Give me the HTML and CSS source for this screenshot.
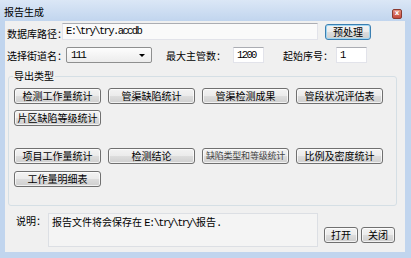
FILE: index.html
```html
<!DOCTYPE html>
<html lang="zh">
<head>
  <meta charset="UTF-8" />
  <title>报告生成</title>
  <link rel="stylesheet" href="styles.css">
</head>
<body>

  <div class="window">
    <div class="titlebar">
      <span class="title">报告生成</span>
      <span class="close">x</span>
    </div>

    <div class="client">
      <div class="row row-path">
        <span class="lbl lbl-path">数据库路径：</span>
        <div class="textbox txt-path">E:\try\try.accdb</div>
        <button class="btn btn-default btn-pre">预处理</button>
      </div>

      <div class="row row-opts">
        <span class="lbl lbl-street">选择街道名：</span>
        <div class="combo">
          <span class="mono">111</span>
          <span class="arrow"></span>
        </div>
        <span class="lbl lbl-max">最大主管数：</span>
        <div class="textbox txt-small">1200</div>
        <span class="lbl lbl-start">起始序号：</span>
        <div class="textbox txt-small">1</div>
      </div>

      <fieldset class="group">
        <legend>导出类型</legend>
        <div class="btn-block">
          <button class="btn btn-export">检测工作量统计</button>
          <button class="btn btn-export">管渠缺陷统计</button>
          <button class="btn btn-export">管渠检测成果</button>
          <button class="btn btn-export">管段状况评估表</button>
          <button class="btn btn-export">片区缺陷等级统计</button>
        </div>
        <div class="btn-block block-second">
          <button class="btn btn-export">项目工作量统计</button>
          <button class="btn btn-export">检测结论</button>
          <button class="btn btn-export btn-small-text">缺陷类型和等级统计</button>
          <button class="btn btn-export">比例及密度统计</button>
          <button class="btn btn-export">工作量明细表</button>
        </div>
      </fieldset>

      <div class="row row-note">
        <span class="lbl lbl-note">说明：</span>
        <div class="note">报告文件将会保存在 <span class="mono">E:\try\try\</span>报告<span class="mono">.</span></div>
        <div class="actions">
          <button class="btn btn-action">打开</button>
          <button class="btn btn-action">关闭</button>
        </div>
      </div>
    </div>
  </div>

</body>
</html>
```

FILE: styles.css
```css
body {
  margin: 0;
  padding: 0;
  font-family: "Noto Sans CJK SC", "Noto Sans", sans-serif;
  font-size: 10px;
  color: #000;
  background: #fff;
}
.window {
  width: 411px;
  height: 258px;
  background: #c1d5ee;
  box-sizing: border-box;
}
.titlebar {
  height: 21px;
  display: flex;
  justify-content: space-between;
  align-items: flex-start;
  padding: 0 9px 0 4px;
  background: linear-gradient(#dbe7f6, #c1d5ee);
}
.title {
  margin-top: 6px;
  line-height: 12px;
  font-size: 10px;
}
.close {
  margin-top: 9px;
  width: 10px;
  height: 10px;
  box-sizing: border-box;
  border: 1px solid #8a3a30;
  border-radius: 2px;
  background: linear-gradient(#e6917f, #c4473a);
  color: #fff;
  font-family: "DejaVu Sans", sans-serif;
  font-size: 7px;
  font-weight: bold;
  line-height: 7px;
  text-align: center;
}
.client {
  margin-left: 5px;
  width: 400px;
  height: 231px;
  background: #f0f0f0;
  padding-left: 2px;
  box-sizing: border-box;
  overflow: hidden;
}
.row {
  display: flex;
  align-items: center;
}
.lbl {
  display: block;
  line-height: 12px;
  white-space: nowrap;
  overflow: visible;
}
.mono {
  font-family: "Liberation Mono", monospace;
  font-size: 10.5px;
  letter-spacing: -1.6px;
}
.textbox {
  box-sizing: border-box;
  background: #fff;
  border: 1px solid #e2e3ea;
  border-top-color: #abadb3;
  font-family: "Liberation Mono", monospace;
  font-size: 10.5px;
  letter-spacing: -1.6px;
  padding: 1px 3px;
  line-height: 12px;
  white-space: nowrap;
}

/* ligne chemin */
.row-path {
  margin-top: 2px;
  height: 17px;
}
.lbl-path {
  width: 55px;
  margin-top: 4px;
}
.txt-path {
  width: 256px;
  height: 17px;
  background: #fafafa;
}
.btn-pre {
  margin-left: 7px;
  width: 46px;
  height: 16px;
  margin-top: 1px;
}

/* ligne options */
.row-opts {
  margin-top: 7px;
  height: 16px;
}
.lbl-street {
  width: 59px;
  margin-top: 2px;
}
.combo {
  width: 86px;
  height: 16px;
  box-sizing: border-box;
  border: 1px solid #8e8f8f;
  border-radius: 2px;
  background: linear-gradient(#fdfdfd, #ececec);
  display: flex;
  align-items: center;
  justify-content: space-between;
  padding: 0 6px 0 4px;
}
.arrow {
  width: 0;
  height: 0;
  border-left: 3px solid transparent;
  border-right: 3px solid transparent;
  border-top: 3px solid #000;
}
.lbl-max {
  margin-left: 14px;
  width: 67px;
  margin-top: 1px;
}
.txt-small {
  width: 31px;
  height: 16px;
}
.lbl-start {
  margin-left: 19px;
  width: 53px;
  margin-top: 1px;
}

/* boutons */
.btn {
  box-sizing: border-box;
  border: 1px solid #707070;
  border-radius: 3px;
  background: linear-gradient(#f3f3f3 0%, #ebebeb 50%, #dddddd 51%, #cfcfcf 100%);
  box-shadow: inset 0 0 0 1px rgba(255,255,255,0.7);
  font-family: "Noto Sans CJK SC", "Noto Sans", sans-serif;
  font-size: 10px;
  line-height: 12px;
  padding: 0;
  color: #000;
  white-space: nowrap;
}
.btn-default {
  border-color: #3c7fb1;
  box-shadow: inset 0 0 0 1px #9fd6f3;
}

/* groupe export */
.group {
  margin: 7px 0 0 1px;
  width: 389px;
  height: 136px;
  box-sizing: border-box;
  border: 1px solid #d5dfe5;
  border-radius: 3px;
  padding: 0 0 0 4px;
}
.group legend {
  padding: 0 1px;
  line-height: 12px;
  font-size: 10px;
}
.btn-block {
  margin: 6px 0 0 1px;
  display: flex;
  flex-wrap: wrap;
  column-gap: 7px;
  row-gap: 6px;
  width: 370px;
}
.block-second {
  margin-top: 22px;
  row-gap: 7px;
}
.btn-export {
  width: 87px;
  height: 16px;
}
.btn-small-text {
  font-size: 9px;
  color: #444;
  letter-spacing: -0.2px;
}

/* ligne note */
.row-note {
  margin-top: 7px;
  align-items: flex-start;
}
.lbl-note {
  margin-left: 9px;
  width: 32px;
  margin-top: 2px;
}
.note {
  width: 270px;
  height: 34px;
  box-sizing: border-box;
  border: 1px solid #dcdfe4;
  background: #f4f4f4;
  padding: 2px 3px;
  line-height: 12px;
  white-space: nowrap;
}
.actions {
  margin: 14px 0 0 6px;
  display: flex;
  gap: 3px;
}
.btn-action {
  width: 34px;
  height: 16px;
}
```
